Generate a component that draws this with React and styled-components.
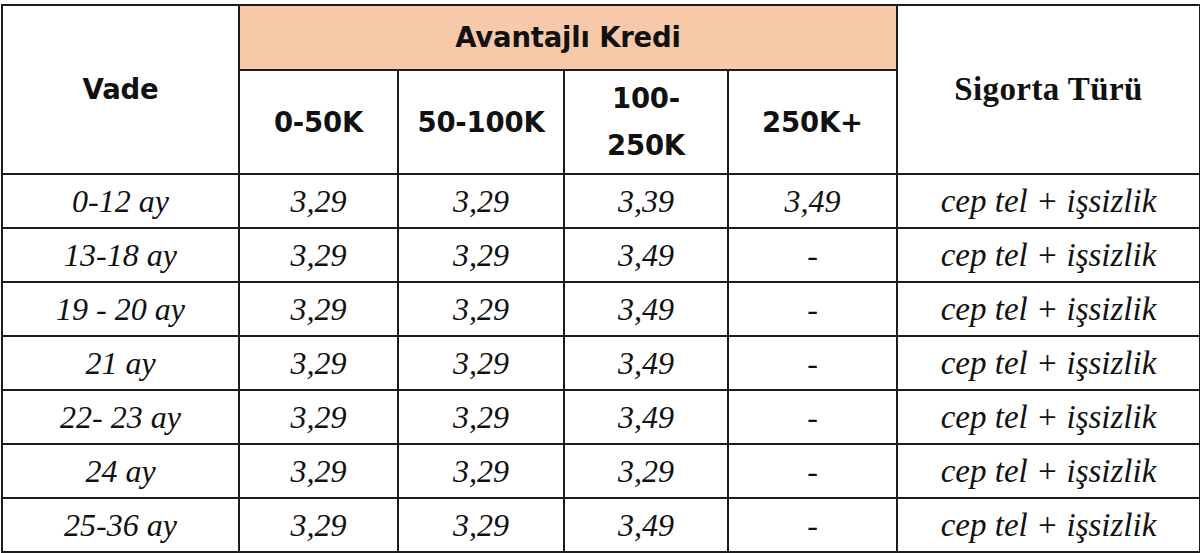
import React from "react";
import styled, { createGlobalStyle } from "styled-components";

const Global = createGlobalStyle`
  html, body { margin: 0; padding: 0; background: #ffffff; }
  body { font-family: "DejaVu Sans", sans-serif; }
`;

const Wrap = styled.div`
  padding: 4px 0 0 1px;
`;

const Table = styled.table`
  border-collapse: collapse;
  table-layout: fixed;
  width: 1198px;
  border: 2px solid #3a3a3a;
`;

const Col = styled.col`
  width: ${(p) => p.$w}px;
`;

const HeadCell = styled.th`
  border: 2px solid #1c1c1c;
  background: ${(p) => (p.$accent ? "#f8c9a9" : "#ffffff")};
  color: #111;
  font-family: ${(p) =>
    p.$serif ? '"Liberation Serif", "Times New Roman", serif' : '"DejaVu Sans", Verdana, sans-serif'};
  font-weight: 700;
  font-size: ${(p) => (p.$serif ? "33px" : "27.5px")};
  letter-spacing: ${(p) => (p.$serif ? "0.4px" : "-0.2px")};
  line-height: 47px;
  text-align: center;
  vertical-align: middle;
  padding: 0 4px;
  height: ${(p) => p.$h || "auto"};
`;

const Cell = styled.td`
  border: 2px solid #1c1c1c;
  color: #111;
  font-family: "Liberation Serif", "Times New Roman", serif;
  font-style: italic;
  font-size: ${(p) => (p.$wide ? "33px" : "32px")};
  text-align: center;
  vertical-align: middle;
  padding: 0 4px;
  height: 52px;
  line-height: 40px;
`;

const widths = [237, 159, 166, 164, 169, 303];

const rows = [
  ["0-12 ay", "3,29", "3,29", "3,39", "3,49"],
  ["13-18 ay", "3,29", "3,29", "3,49", "-"],
  ["19 - 20 ay", "3,29", "3,29", "3,49", "-"],
  ["21 ay", "3,29", "3,29", "3,49", "-"],
  ["22- 23 ay", "3,29", "3,29", "3,49", "-"],
  ["24 ay", "3,29", "3,29", "3,29", "-"],
  ["25-36 ay", "3,29", "3,29", "3,49", "-"],
];

export default function App() {
  return (
    <>
      <Global />
      <Wrap>
        <Table>
          <colgroup>
            {widths.map((w, i) => (
              <Col key={i} $w={w} />
            ))}
          </colgroup>
          <thead>
            <tr>
              <HeadCell rowSpan={2}>Vade</HeadCell>
              <HeadCell colSpan={4} $accent $h="63px">
                Avantajlı Kredi
              </HeadCell>
              <HeadCell rowSpan={2} $serif>
                Sigorta Türü
              </HeadCell>
            </tr>
            <tr>
              <HeadCell $h="102px">0-50K</HeadCell>
              <HeadCell>50-100K</HeadCell>
              <HeadCell>
                100-
                <br />
                250K
              </HeadCell>
              <HeadCell>250K+</HeadCell>
            </tr>
          </thead>
          <tbody>
            {rows.map((r, i) => (
              <tr key={i}>
                {r.map((v, j) => (
                  <Cell key={j}>{v}</Cell>
                ))}
                <Cell $wide>cep tel + işsizlik</Cell>
              </tr>
            ))}
          </tbody>
        </Table>
      </Wrap>
    </>
  );
}
